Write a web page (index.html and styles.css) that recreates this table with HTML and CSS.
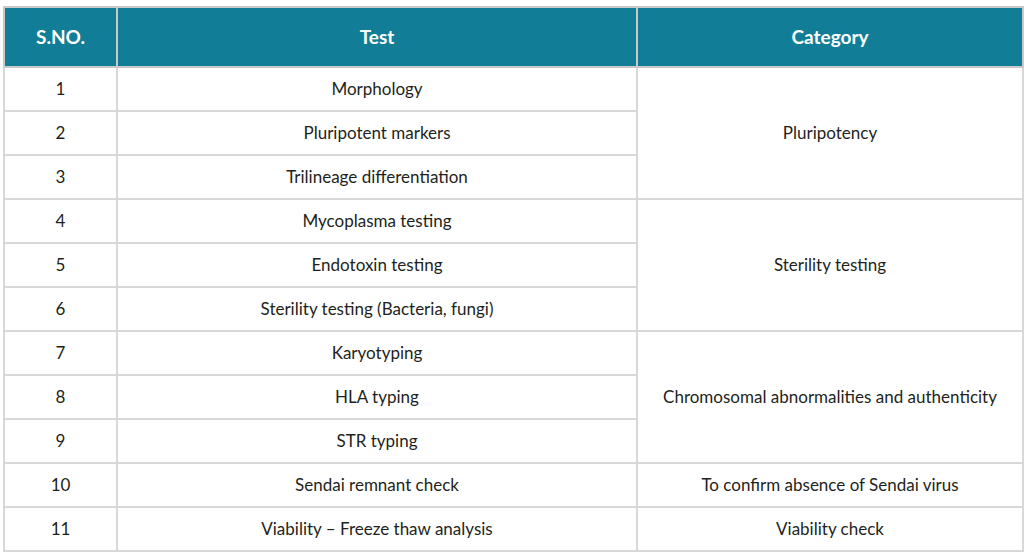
FILE: index.html
```html
<!DOCTYPE html>
<html>
<head>
<meta charset="utf-8">
<link rel="stylesheet" href="styles.css">
</head>
<body>
<div class="wrap">
<table class="tests">
  <colgroup>
    <col class="c1"><col class="c2"><col class="c3">
  </colgroup>
  <thead>
    <tr class="head"><th>S.NO.</th><th>Test</th><th>Category</th></tr>
  </thead>
  <tbody>
    <tr><td>1</td><td>Morphology</td><td rowspan="3">Pluripotency</td></tr>
    <tr><td>2</td><td>Pluripotent markers</td></tr>
    <tr><td>3</td><td>Trilineage differentiation</td></tr>
    <tr><td>4</td><td>Mycoplasma testing</td><td rowspan="3">Sterility testing</td></tr>
    <tr><td>5</td><td>Endotoxin testing</td></tr>
    <tr><td>6</td><td>Sterility testing (Bacteria, fungi)</td></tr>
    <tr><td>7</td><td>Karyotyping</td><td rowspan="3">Chromosomal abnormalities and authenticity</td></tr>
    <tr><td>8</td><td>HLA typing</td></tr>
    <tr><td>9</td><td>STR typing</td></tr>
    <tr><td>10</td><td>Sendai remnant check</td><td>To confirm absence of Sendai virus</td></tr>
    <tr><td>11</td><td>Viability – Freeze thaw analysis</td><td>Viability check</td></tr>
  </tbody>
</table>
</div>
</body>
</html>
```
FILE: styles.css
```css
html, body {
  margin: 0;
  padding: 0;
  background: #ffffff;
}
.wrap {
  padding: 6px 0 0 3px;
}
.tests {
  border-collapse: collapse;
  width: 1019px;
  table-layout: fixed;
  font-family: Lato, "Open Sans", sans-serif;
  color: #231f20;
}
.c1 { width: 113px; }
.c2 { width: 520px; }
.c3 { width: 386px; }
.tests tr { height: 44px; }
.tests tr.head { height: 60px; }
.tests th, .tests td {
  border: 2px solid #d8d8d8;
  text-align: center;
  vertical-align: middle;
  padding: 0;
  line-height: 20px;
}
.tests th {
  background: #117d97;
  color: #ffffff;
  font-size: 19px;
  font-weight: 700;
  border-color: #c9c9c9;
}
.tests td {
  font-size: 17px;
}
```
